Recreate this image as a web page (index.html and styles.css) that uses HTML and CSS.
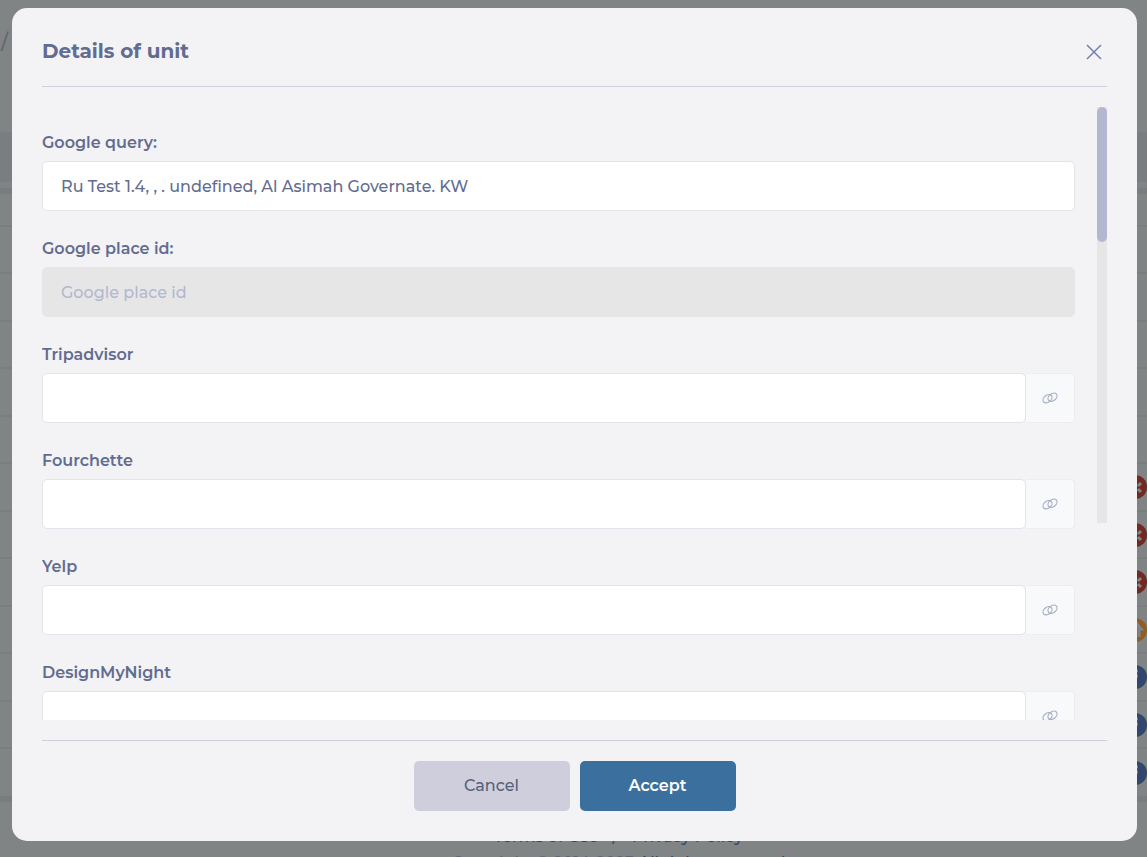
FILE: index.html
```html
<!DOCTYPE html>
<html lang="en">
  <head>
    <meta charset="UTF-8" />
    <meta name="viewport" content="width=device-width, initial-scale=1.0" />
    <title>Details of unit</title>
    <link rel="stylesheet" href="styles.css">
  </head>
  <body>
    <svg class="sprite" aria-hidden="true">
      <symbol id="link" viewBox="0 0 16 12">
        <ellipse cx="5.500" cy="6.700" rx="5" ry="3.500" transform="rotate(-38 5.500 6.700)" />
        <ellipse cx="10.500" cy="5.300" rx="5" ry="3.500" transform="rotate(-38 10.500 5.300)" />
      </symbol>
      <symbol id="yelp" viewBox="0 0 24 24">
        <path d="M11 5v6M9 13l-4 3M11 14v5M15 14l3 3M15 11l3-3" />
      </symbol>
      <symbol id="home" viewBox="0 0 24 24">
        <path d="M9 19v-8H6l7-6 5 6h-2v8" />
      </symbol>
      <symbol id="fb" viewBox="0 0 24 24">
        <path d="M15 6h-2q-2 0-2 2v11M8 11h7" />
      </symbol>
    </svg>

    <div class="page">
      <div class="crumbs">/</div>
      <div class="table-head"></div>
      <div class="rows">
        <div class="row"></div>
        <div class="row"></div>
        <div class="row"></div>
        <div class="row"></div>
        <div class="row"></div>
        <div class="row"></div>
        <div class="row"><span class="source red"><svg><use href="#yelp" /></svg></span></div>
        <div class="row"><span class="source red"><svg><use href="#yelp" /></svg></span></div>
        <div class="row"><span class="source red"><svg><use href="#yelp" /></svg></span></div>
        <div class="row"><span class="source orange"><svg><use href="#home" /></svg></span></div>
        <div class="row"><span class="source blue"><svg><use href="#fb" /></svg></span></div>
        <div class="row"><span class="source blue"><svg><use href="#fb" /></svg></span></div>
        <div class="row"><span class="source blue"><svg><use href="#fb" /></svg></span></div>
      </div>
      <div class="footer">
        <p><a href="#">Terms of Use</a><span class="slash">/</span><a href="#">Privacy Policy</a></p>
        <p><span class="copy">Copyright © 2014-2023</span> All rights reserved</p>
      </div>
    </div>

    <div class="overlay">
      <div class="modal" role="dialog" aria-labelledby="title">
        <div class="modal-header">
          <h1 id="title">Details of unit</h1>
          <button type="button" class="close" aria-label="Close">
            <svg viewBox="0 0 16 16"><path d="M1 1l14 14M15 1L1 15" /></svg>
          </button>
        </div>
        <div class="modal-body">
          <form class="fields" id="unit">
            <div class="field">
              <label for="query">Google query:</label>
              <input type="text" id="query" value="Ru Test 1.4, , . undefined, Al Asimah Governate. KW" />
            </div>
            <div class="field">
              <label for="place">Google place id:</label>
              <input type="text" id="place" placeholder="Google place id" disabled />
            </div>
            <div class="field">
              <label for="tripadvisor">Tripadvisor</label>
              <div class="group">
                <input type="text" id="tripadvisor" />
                <a href="#" class="link" aria-label="Open Tripadvisor"><svg><use href="#link" /></svg></a>
              </div>
            </div>
            <div class="field">
              <label for="fourchette">Fourchette</label>
              <div class="group">
                <input type="text" id="fourchette" />
                <a href="#" class="link" aria-label="Open Fourchette"><svg><use href="#link" /></svg></a>
              </div>
            </div>
            <div class="field">
              <label for="yelp-url">Yelp</label>
              <div class="group">
                <input type="text" id="yelp-url" />
                <a href="#" class="link" aria-label="Open Yelp"><svg><use href="#link" /></svg></a>
              </div>
            </div>
            <div class="field">
              <label for="dmn">DesignMyNight</label>
              <div class="group">
                <input type="text" id="dmn" />
                <a href="#" class="link" aria-label="Open DesignMyNight"><svg><use href="#link" /></svg></a>
              </div>
            </div>
          </form>
          <div class="track"><div class="thumb"></div></div>
        </div>
        <div class="modal-footer">
          <button type="button" class="btn cancel">Cancel</button>
          <button type="submit" form="unit" class="btn accept">Accept</button>
        </div>
      </div>
    </div>
  </body>
</html>
```

FILE: styles.css
```css
* {
  margin: 0;
  padding: 0;
  box-sizing: border-box;
}
body {
  height: 100vh;
  overflow: hidden;
  background-color: #808484;
  color: #626c90;
  font-family: Montserrat, Inter, sans-serif;
  font-size: 16px;
  font-weight: 500;
}
svg {
  fill: none;
  stroke: currentColor;
}
.sprite {
  position: absolute;
  width: 0;
  height: 0;
}

/* page under the modal */
.crumbs {
  height: 132px;
  padding: 27px 1px;
  color: #626672;
  font-size: 20px;
  line-height: 30px;
}
.table-head {
  height: 62px;
  border-bottom: 6px solid #7a7d80;
  background: linear-gradient(#7b7e81 50px, #808484 50px);
}
.rows {
  border-bottom: 6px solid #7a7d80;
}
.row {
  display: flex;
  justify-content: flex-end;
  align-items: center;
  height: 48px;
  border-bottom: 2px solid #7a7e80;
}
.row:nth-child(even) {
  height: 47px;
}
.row:first-child {
  height: 33px;
}
.row:last-child {
  height: 47px;
  border-bottom: none;
}
.source {
  width: 24px;
  height: 24px;
  border-radius: 50%;
  color: #808484;
}
.source svg {
  display: block;
  width: 24px;
  height: 24px;
  stroke-width: 3;
}
.red {
  background-color: #722823;
}
.orange {
  background-color: #915d27;
}
.blue {
  background-color: #34466b;
}
.footer {
  padding: 22px 0 0 90px;
  color: #34495f;
  line-height: 26px;
  text-align: center;
}
.footer a {
  color: #34495f;
  text-decoration: none;
}
.slash {
  margin: 0 14px;
}
.copy {
  color: #626672;
}

/* modal */
.overlay {
  position: fixed;
  inset: 0;
  display: flex;
  padding: 8px 10px 16px 12px;
}
.modal {
  display: flex;
  flex-direction: column;
  flex: 1;
  padding: 0 30px 30px;
  border-radius: 15px;
  background-color: #f3f3f5;
}
.modal-header {
  display: flex;
  justify-content: space-between;
  align-items: center;
  height: 79px;
  padding-top: 8px;
  border-bottom: 1px solid #cfcedd;
}
h1 {
  font-size: 20px;
  font-weight: 700;
}
.close {
  width: 26px;
  height: 26px;
  padding-top: 2px;
  border: none;
  background: none;
  color: #7580b0;
}
.close svg {
  display: block;
  width: 16px;
  height: 16px;
  margin: auto;
  stroke-width: 1.5;
}
.modal-body {
  display: flex;
  flex: 1;
  gap: 22px;
  min-height: 0;
  padding: 20px 0;
}
.fields {
  flex: 1;
  padding-top: 26px;
  overflow: hidden;
}
.field {
  margin-bottom: 28px;
}
label {
  display: block;
  margin-bottom: 8px;
  font-weight: 600;
  line-height: 20px;
}
.field input {
  display: block;
  width: 100%;
  height: 50px;
  padding: 0 18px;
  border: 1px solid #e3e3ec;
  border-radius: 5px;
  background-color: #fff;
  color: #626c90;
  font: inherit;
}
.field input:disabled {
  border-color: #e6e6e6;
  background-color: #e6e6e6;
}
.field input::placeholder {
  color: #b3b8d0;
}
.group {
  display: flex;
}
.group input {
  flex: 1;
}
.link {
  display: flex;
  justify-content: center;
  align-items: center;
  width: 49px;
  border: 1px solid #ececf1;
  border-left: none;
  border-radius: 0 5px 5px 0;
  background-color: #f7f9fb;
  color: #a9afc5;
}
.link svg {
  width: 16px;
  height: 12px;
  stroke-width: 1.2;
}
.track {
  width: 10px;
  height: 416px;
  background-color: #e6e6e6;
}
.thumb {
  height: 135px;
  border-radius: 5px;
  background-color: #b3b8d0;
}
.modal-footer {
  display: flex;
  justify-content: center;
  gap: 10px;
  padding-top: 20px;
  border-top: 1px solid #cfcedd;
}
.btn {
  width: 156px;
  height: 50px;
  padding-bottom: 2px;
  border: none;
  border-radius: 5px;
  font: inherit;
}
.cancel {
  background-color: #cfcedd;
  color: #58617a;
}
.accept {
  background-color: #3b709e;
  color: #fff;
  font-weight: 600;
}
```
